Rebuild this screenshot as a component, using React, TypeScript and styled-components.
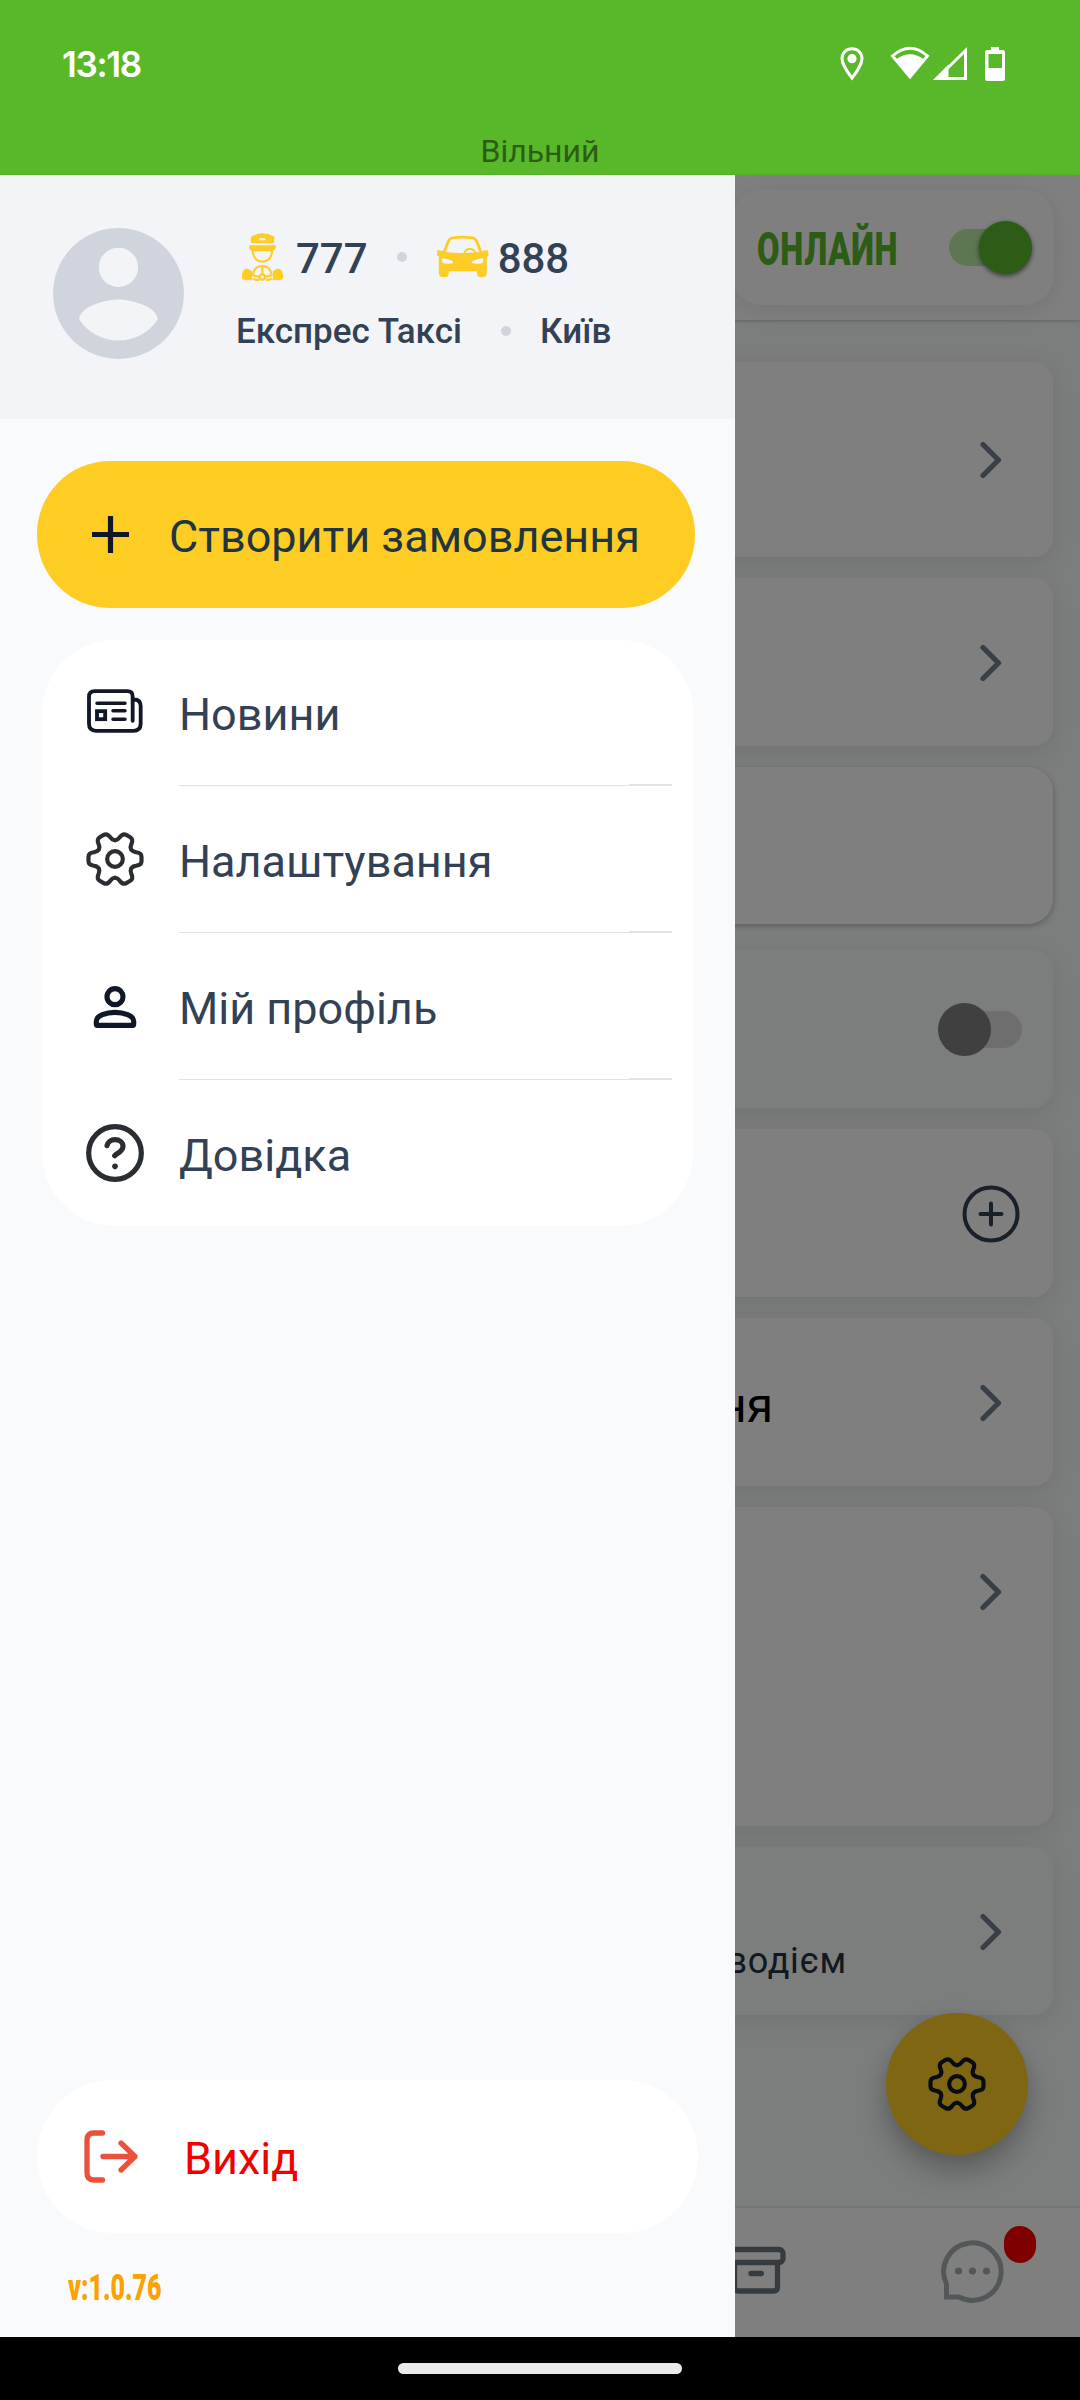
import React from "react";
import styled, { createGlobalStyle } from "styled-components";

const GlobalStyle = createGlobalStyle`
  body { margin: 0; background: #000; }
  *, *::before, *::after { box-sizing: border-box; }
`;

const Screen = styled.div`
  position: relative;
  width: 1080px;
  height: 2400px;
  overflow: hidden;
  display: flex;
  flex-direction: column;
  font-family: Roboto, "Noto Sans", sans-serif;
  color: #334155;
`;

/* ---------- status bar ---------- */

const StatusBar = styled.header`
  height: 175px;
  flex: none;
  background: #59b82a;
  display: flex;
  flex-direction: column;
  justify-content: space-between;
`;

const StatusRow = styled.div`
  display: flex;
  justify-content: space-between;
  align-items: center;
  padding: 42px 74px 0 62px;
  height: 86px;
`;

const Clock = styled.time`
  font: 600 35px/44px Inter, Roboto, sans-serif;
  letter-spacing: -1.3px;
  color: #fff;
`;

const StatusIcons = styled.div`
  display: flex;
  align-items: center;
  height: 44px;
`;

const DriverState = styled.div`
  text-align: center;
  font-size: 32px;
  line-height: 38px;
  height: 43px;
  color: #2c5c15;
`;

/* ---------- page behind the drawer ---------- */

const Body = styled.div`
  position: relative;
  flex: 1;
  min-height: 0;
  display: flex;
  flex-direction: column;
  background: #f8fcfa;
`;

const Overlay = styled.div`
  position: absolute;
  inset: 0;
  background: rgba(0, 0, 0, 0.5);
`;

const TopBar = styled.div`
  height: 145px;
  flex: none;
  background: #fff;
  display: flex;
  justify-content: flex-end;
  align-items: center;
  padding: 0 26px 0 0;
  box-shadow: 0 1px 3px rgba(0, 0, 0, 0.22);
`;

const OnlineCard = styled.div`
  width: 322px;
  height: 115px;
  border-radius: 30px;
  background: #fff;
  box-shadow: 0 4px 24px rgba(30, 70, 30, 0.12);
  display: flex;
  align-items: center;
  padding: 0 22px 0 25px;
  justify-content: space-between;
`;

const Condensed = styled.span<{ $size: number; $scale: number; $w: number; $color: string; $gap?: number; $drop?: number }>`
  display: block;
  width: ${(p) => p.$w}px;
  padding-top: ${(p) => p.$drop ?? 0}px;
  white-space: nowrap;
  font-weight: 900;
  font-size: ${(p) => p.$size}px;
  line-height: 1.2;
  letter-spacing: ${(p) => p.$gap ?? 0}px;
  color: ${(p) => p.$color};
  transform: scaleX(${(p) => p.$scale});
  transform-origin: left center;
`;

const Toggle = styled.div<{ $on?: boolean }>`
  width: 84px;
  height: 53px;
  display: flex;
  align-items: center;
  justify-content: ${(p) => (p.$on ? "flex-end" : "flex-start")};
  position: relative;
  &::before {
    content: "";
    position: absolute;
    left: ${(p) => (p.$on ? 1 : 9)}px;
    top: 8px;
    width: 75px;
    height: 37px;
    border-radius: 19px;
    background: ${(p) => (p.$on ? "#bceca4" : "#dcdcdc")};
  }
`;

const Knob = styled.i<{ $on?: boolean }>`
  position: relative;
  width: 53px;
  height: 53px;
  border-radius: 50%;
  background: ${(p) => (p.$on ? "#58b82a" : "#808080")};
  box-shadow: ${(p) => (p.$on ? "0 2px 5px rgba(0,0,0,.55)" : "none")};
`;

const Cards = styled.main`
  flex: 1;
  min-height: 0;
  padding: 42px 27px 0;
`;

const Card = styled.section<{ $h: number; $gap?: number; $tinted?: boolean; $raised?: boolean; $top?: boolean }>`
  height: ${(p) => p.$h}px;
  margin-bottom: ${(p) => p.$gap ?? 21}px;
  border-radius: ${(p) => (p.$raised ? 25 : 20)}px;
  background: ${(p) => (p.$tinted ? "#f8fcfa" : "#fff")};
  box-shadow: ${(p) =>
    p.$raised ? "0 2px 6px rgba(0,0,0,.26)" : "0 6px 24px rgba(40,40,40,.1)"};
  display: flex;
  justify-content: space-between;
  align-items: ${(p) => (p.$top ? "flex-start" : "center")};
  padding: ${(p) => (p.$top ? "65px" : "1px")} 29px 0 29px;
`;

const CardText = styled.span<{ $right: number; $size: number; $shift: number; $dark?: boolean; $gap?: number }>`
  width: ${(p) => p.$right - 56}px;
  text-align: right;
  white-space: nowrap;
  font-size: ${(p) => p.$size}px;
  line-height: 1.2;
  letter-spacing: ${(p) => p.$gap ?? 0}px;
  padding-top: ${(p) => p.$shift}px;
  color: ${(p) => (p.$dark ? "#000" : "#24303f")};
`;

const Trailing = styled.div<{ $w?: number }>`
  margin-left: auto;
  width: ${(p) => p.$w ?? 67}px;
  display: flex;
  justify-content: center;
`;

const Fab = styled.div`
  position: absolute;
  left: 886px;
  top: 1838px;
  width: 142px;
  height: 142px;
  border-radius: 50%;
  background: #fecc24;
  box-shadow: 0 16px 30px rgba(0, 0, 0, 0.26), 0 4px 14px rgba(0, 0, 0, 0.06);
  display: flex;
  align-items: center;
  justify-content: center;
  padding: 0 1px 1px 0;
`;

const BottomNav = styled.nav`
  height: 131px;
  flex: none;
  background: #fff;
  border-top: 2px solid #e8e8e8;
  display: flex;
  justify-content: flex-end;
`;

const NavItem = styled.div`
  position: relative;
  width: 216px;
  display: flex;
  align-items: center;
  justify-content: center;
  padding-bottom: 3px;
`;

const Badge = styled.i`
  position: absolute;
  left: 140px;
  top: 18px;
  width: 32px;
  height: 37px;
  border-radius: 16px;
  background: #f00;
`;

/* ---------- drawer ---------- */

const Drawer = styled.aside`
  position: absolute;
  left: 0;
  top: 0;
  bottom: 0;
  width: 735px;
  background: #f9fafc;
  display: flex;
  flex-direction: column;
`;

const Profile = styled.div`
  height: 244px;
  flex: none;
  background: #f2f4f8;
  display: flex;
  padding: 40px 0 0 40px;
`;

const ProfileInfo = styled.div`
  padding: 2px 0 0 39px;
  display: flex;
  flex-direction: column;
`;

const InfoRow = styled.div<{ $h: number; $size: number }>`
  display: flex;
  align-items: center;
  height: ${(p) => p.$h}px;
  font-size: ${(p) => p.$size}px;
  font-weight: 500;
  white-space: nowrap;
`;

const Figure = styled.span<{ $l?: number; $gap: number }>`
  display: flex;
  align-items: center;
  gap: ${(p) => p.$gap}px;
  padding-left: ${(p) => p.$l ?? 0}px;
  svg {
    margin-top: -3px;
  }
`;

const Company = styled.span`
  width: 223px;
`;

const Dot = styled.i<{ $l: number; $r: number }>`
  width: 10px;
  height: 10px;
  border-radius: 50%;
  background: #cfd4dd;
  margin: -2px ${(p) => p.$r}px 0 ${(p) => p.$l}px;
`;

const CreateButton = styled.button`
  margin: 42px 0 0 37px;
  width: 658px;
  height: 147px;
  flex: none;
  border: 0;
  border-radius: 73px;
  background: #fdcd24;
  display: flex;
  align-items: center;
  padding: 0 0 0 53px;
  font: 400 45px/54px Roboto, sans-serif;
  color: #1f3540;
`;

const ButtonLabel = styled.span`
  padding: 4px 0 0 38px;
  white-space: nowrap;
`;

const Menu = styled.ul`
  list-style: none;
  margin: 32px 0 0 42px;
  padding: 0;
  width: 651px;
  flex: none;
  border-radius: 73px;
  background: #fff;
`;

const MenuItem = styled.li`
  height: 147px;
  display: flex;
  align-items: stretch;
  padding: 0 21px 0 43px;
  &:first-child,
  &:last-child {
    height: 146px;
  }
`;

const MenuIcon = styled.span<{ $lift: number }>`
  width: 94px;
  display: flex;
  align-items: center;
  padding: 0 0 ${(p) => p.$lift}px 0;
`;

const MenuLabel = styled.span`
  position: relative;
  flex: 1;
  display: flex;
  align-items: center;
  padding-top: 4px;
  font-size: 45px;
  ${MenuItem}:not(:last-child) & {
    border-bottom: 1px solid #e3e3e3;
  }
  ${MenuItem}:not(:last-child) &::after {
    content: "";
    position: absolute;
    right: 0;
    bottom: 0;
    width: 43px;
    height: 1px;
    background: #e3e3e3;
  }
`;

const Logout = styled.div`
  margin: auto 0 0 37px;
  width: 661px;
  height: 153px;
  flex: none;
  border-radius: 76px;
  background: #fff;
  display: flex;
  align-items: center;
  padding-left: 47px;
  font-size: 45px;
  color: #f20000;
`;

const LogoutLabel = styled.span`
  padding: 4px 0 0 45px;
`;

const Version = styled.div`
  height: 104px;
  flex: none;
  padding: 34px 0 0 68px;
`;

const SystemBar = styled.footer`
  height: 63px;
  flex: none;
  background: #000;
  display: flex;
  justify-content: center;
  padding-top: 26px;
`;

const HomePill = styled.i`
  width: 284px;
  height: 11px;
  border-radius: 6px;
  background: #eaeaea;
`;

/* ---------- drawings ---------- */

const gearPath = (() => {
  const seg = [
    [52, -24, 54, -21, 62, -20.5],
    [70, -19.500, 79.500, -19, 79.500, -7],
    [79.500, -2, 79.500, 2, 79.500, 7],
    [79.500, 19, 70, 19.500, 62, 20.5],
    [54, 21, 52, 24, 48.5, 28],
  ];
  let d = "M48.5 -28";
  for (let i = 0; i < 6; i++) {
    const a = (i * Math.PI) / 3;
    const rot = (x: number, y: number) =>
      `${(x * Math.cos(a) - y * Math.sin(a)).toFixed(2)} ${(x * Math.sin(a) + y * Math.cos(a)).toFixed(2)}`;
    if (i > 0) d += ` L${rot(48.5, -28)}`;
    for (const s of seg) d += ` C${rot(s[0], s[1])} ${rot(s[2], s[3])} ${rot(s[4], s[5])}`;
  }
  return d + "Z";
})();

const Gear = ({ color }: { color: string }) => (
  <svg width="60" height="60" viewBox="-90 -90 180 180" fill="none" stroke={color} strokeWidth="12.500" strokeLinejoin="round">
    <path d={gearPath} />
    <circle r="23.500" />
  </svg>
);

const News = () => (
  <svg width="60" height="60" viewBox="47 16.5 180 180" fill="none" stroke="#101828" strokeWidth="11.5" strokeLinecap="round" strokeLinejoin="round">
    <path d="M190 136V63q0-16-16-16H76q-17 0-17 17v81q0 21 21 21h112q22 0 22-22V92q0-20-20-20h-4" />
    <path d="M83 83h84M131 106h36M131 131h36" strokeWidth="10.500" />
    <rect x="83" y="107" width="24.500" height="24" strokeLinejoin="miter" />
  </svg>
);

const Person = () => (
  <svg width="60" height="60" viewBox="47 904 180 180" fill="none" stroke="#101828" strokeWidth="15.500">
    <circle cx="137" cy="963" r="24" />
    <path d="M84 1049q-3 0-3-4v-8c0-17 30-27 56-27s56 10 56 27v8q0 4-3 4z" strokeLinejoin="round" />
  </svg>
);

const Help = () => (
  <svg width="60" height="60" viewBox="47 1345 180 180" fill="none" stroke="#2a2d31" strokeWidth="15.500" strokeLinecap="round">
    <circle cx="137" cy="1435" r="79" />
    <path d="M113 1413c2-9 11-18 24-18 13 0 24 8 24 20 0 17-20 21-25 28" />
    <circle cx="137" cy="1475" r="8.500" fill="#2a2d31" stroke="none" />
  </svg>
);

const Driver = () => (
  <svg width="46" height="50" viewBox="60 62 138 150" fill="#fecc24">
    <path fillRule="evenodd" d="M93 76q34-20 70 0 1 10-2 20H94q-3-10-1-20zM121 80q-4 3-4 7h20q0-4-4-7z" />
    <path d="M89 101q38 2 77 0 3 8-1 13-3 6-9 6H98q-6 0-9-6-3-6 0-13z" />
    <path d="M98 116v4q3 29 29 31 27-2 29-31v-4" fill="none" stroke="#fecc24" strokeWidth="6" />
    <path d="M74 173q9-2 16 3l6 3q1 14-1 20l3 3-3 6-6-3q-12 4-22-2-5-18 7-30zM181 173q-9-2-16 3l-6 3q-1 14 1 20l-3 3 3 6 6-3q12 4 22-2 5-18-7-30z" />
    <path d="M99 188q6-24 28-24t28 24M127 165v24M96 191l23 6M158 191l-23 6M100 202q6 5 17 3M155 202q-6 5-17 3" fill="none" stroke="#fecc24" strokeWidth="6.500" />
    <circle cx="127" cy="197" r="8" fill="#f2f4f8" stroke="#fecc24" strokeWidth="6" />
  </svg>
);

const Car = () => (
  <svg width="53" height="43" viewBox="649.500 74 159 129">
    <path d="M673 127l13-33q5-12 18-12 25-3 50 0 13 0 18 12l13 33" fill="none" stroke="#fecc24" strokeWidth="8.500" />
    <path d="M734 130q3-14 17-15 14 1 17 15" fill="none" stroke="#fecc24" strokeWidth="6" />
    <path
      fill="#fecc24"
      fillRule="evenodd"
      d="M654 119l13 2q3 1 3 3 59 8 118 0 0-2 3-3l13-2 4 15q-1 3-6 3v46q0 17-8 17h-14q-8 0-8-17h-84q0 17-8 17h-14q-8 0-8-17v-46q-5 0-6-3zM667 144q-2 12 4 15 14 2 28 0 4-5-2-8-13-6-30-7zM791 144q2 12-4 15-14 2-28 0-4-5 2-8 13-6 30-7z"
    />
  </svg>
);

const Chevron = () => (
  <svg width="26" height="40" viewBox="0 0 26 40" fill="none" stroke="#707f8c" strokeWidth="5.300" strokeLinecap="round" strokeLinejoin="round">
    <path d="M5 4.500L20.500 20L5 35.500" />
  </svg>
);

const App = () => (
  <Screen>
    <GlobalStyle />
    <StatusBar>
      <StatusRow>
        <Clock>13:18</Clock>
        <StatusIcons>
          <svg width="166" height="36" viewBox="0 0 166 36" fill="none" stroke="#fff">
            <path d="M12 2.700c-5.600 0-10 4.300-10 9.800C2 19.500 12 32 12 32s10-12.500 10-19.500c0-5.500-4.400-9.800-10-9.800z" strokeWidth="3" />
            <circle cx="12" cy="12.700" r="4.600" fill="#fff" stroke="none" />
            <path d="M52.500 10q17.500-15.500 35 0L70 31z" strokeWidth="3" />
            <path d="M56.500 13q13.500-9.500 27 0L70 32z" fill="#fff" stroke="none" />
            <path d="M97 32.500L125.500 4.500v28z" strokeWidth="3" />
            <path d="M93 34L108.500 18.500v15.500z" fill="#fff" stroke="none" />
            <path
              fill="#fff"
              stroke="none"
              fillRule="evenodd"
              d="M151 1h8v3h3.500q2.500 0 2.500 2.500v26q0 2.500-2.500 2.500h-15q-2.500 0-2.500-2.500v-26q0-2.500 2.500-2.500h3.500zM148.500 8v14h13.500V8z"
            />
          </svg>
        </StatusIcons>
      </StatusRow>
      <DriverState>Вільний</DriverState>
    </StatusBar>

    <Body>
      <TopBar>
        <OnlineCard>
          <Condensed $size={46} $scale={0.71} $w={138} $color="#58b82a" $gap={1} $drop={5}>
            ОНЛАЙН
          </Condensed>
          <Toggle $on>
            <Knob $on />
          </Toggle>
        </OnlineCard>
      </TopBar>
      <Cards>
        <Card $h={195}>
          <Trailing><Chevron /></Trailing>
        </Card>
        <Card $h={168}>
          <Trailing><Chevron /></Trailing>
        </Card>
        <Card $h={157} $gap={26} $raised />
        <Card $h={158} $tinted>
          <Trailing $w={88}>
            <Toggle>
              <Knob />
            </Toggle>
          </Trailing>
        </Card>
        <Card $h={168}>
          <Trailing>
            <svg width="58" height="58" viewBox="0 0 58 58" fill="none" stroke="#344155" strokeWidth="4" strokeLinecap="round">
              <circle cx="29" cy="29" r="26.500" />
              <path d="M29 18.500v21M18.500 29h21" />
            </svg>
          </Trailing>
        </Card>
        <Card $h={168}>
          <CardText $right={773} $size={48} $shift={6} $dark>ня</CardText>
          <Trailing><Chevron /></Trailing>
        </Card>
        <Card $h={319} $top>
          <Trailing><Chevron /></Trailing>
        </Card>
        <Card $h={168} $tinted>
          <CardText $right={847} $size={36} $shift={60} $gap={0.7}>водієм</CardText>
          <Trailing><Chevron /></Trailing>
        </Card>
      </Cards>
      <BottomNav>
        <NavItem>
          <svg width="62" height="50" viewBox="0 0 62 50" fill="none" stroke="#6a767e" strokeWidth="5.300" strokeLinecap="round">
            <rect x="4" y="3.500" width="54" height="13" rx="4" />
            <path d="M9.500 17v24q0 4 4 4h35q4 0 4-4V17M26 27.500h10.500" />
          </svg>
        </NavItem>
        <NavItem>
          <svg width="66" height="66" viewBox="0 0 66 66" fill="none" stroke="#a6aeb2" strokeWidth="5">
            <path d="M7.500 46V59h12.500a28.700 28.700 0 1 0-12.500-13z" />
            <g fill="#a6aeb2" stroke="none">
              <circle cx="19.500" cy="33" r="3.600" />
              <circle cx="33.500" cy="33" r="3.600" />
              <circle cx="47.500" cy="33" r="3.600" />
            </g>
          </svg>
          <Badge />
        </NavItem>
      </BottomNav>
      <Fab>
        <Gear color="#101828" />
      </Fab>
      <Overlay />

      <Drawer>
        <Profile>
          <svg width="157" height="157" viewBox="0 0 24 24" fill="#cfd4dd">
            <path d="M12 2C6.480 2 2 6.480 2 12s4.480 10 10 10 10-4.480 10-10S17.520 2 12 2zm0 3c1.660 0 3 1.340 3 3s-1.340 3-3 3-3-1.340-3-3 1.340-3 3-3zm0 14.200c-2.500 0-4.710-1.280-6-3.220.030-1.990 4-3.080 6-3.080 1.990 0 5.970 1.090 6 3.080-1.290 1.940-3.500 3.220-6 3.220z" />
          </svg>
          <ProfileInfo>
            <InfoRow $h={82} $size={42}>
              <Figure $l={4} $gap={10}>
                <Driver />
                777
              </Figure>
              <Dot $l={29} $r={29} />
              <Figure $gap={9}>
                <Car />
                888
              </Figure>
            </InfoRow>
            <InfoRow $h={65} $size={35}>
              <Company>Експрес Таксі</Company>
              <Dot $l={42} $r={29} />
              Київ
            </InfoRow>
          </ProfileInfo>
        </Profile>

        <CreateButton>
          <svg width="41" height="41" viewBox="0 0 41 41" stroke="#101828" strokeWidth="5.200">
            <path d="M20.500 2v37M2 20.500h37" />
          </svg>
          <ButtonLabel>Створити замовлення</ButtonLabel>
        </CreateButton>

        <Menu>
          <MenuItem>
            <MenuIcon $lift={5}><News /></MenuIcon>
            <MenuLabel>Новини</MenuLabel>
          </MenuItem>
          <MenuItem>
            <MenuIcon $lift={1}><Gear color="#2a2d31" /></MenuIcon>
            <MenuLabel>Налаштування</MenuLabel>
          </MenuItem>
          <MenuItem>
            <MenuIcon $lift={0}><Person /></MenuIcon>
            <MenuLabel>Мій профіль</MenuLabel>
          </MenuItem>
          <MenuItem>
            <MenuIcon $lift={0}><Help /></MenuIcon>
            <MenuLabel>Довідка</MenuLabel>
          </MenuItem>
        </Menu>

        <Logout>
          <svg width="55" height="56" viewBox="0 0 55 56" fill="none" stroke="#e9513d" strokeWidth="5.300" strokeLinecap="round" strokeLinejoin="round">
            <path d="M18.500 4H10Q3 4 3 11v33q0 7 7 7h8.500" />
            <path d="M19 27.500h32M37 14l14 13.500L37 41" />
          </svg>
          <LogoutLabel>Вихід</LogoutLabel>
        </Logout>
        <Version>
          <Condensed $size={36} $scale={0.695} $w={95} $color="#fba100">
            v:1.0.76
          </Condensed>
        </Version>
      </Drawer>
    </Body>

    <SystemBar>
      <HomePill />
    </SystemBar>
  </Screen>
);

export default App;
